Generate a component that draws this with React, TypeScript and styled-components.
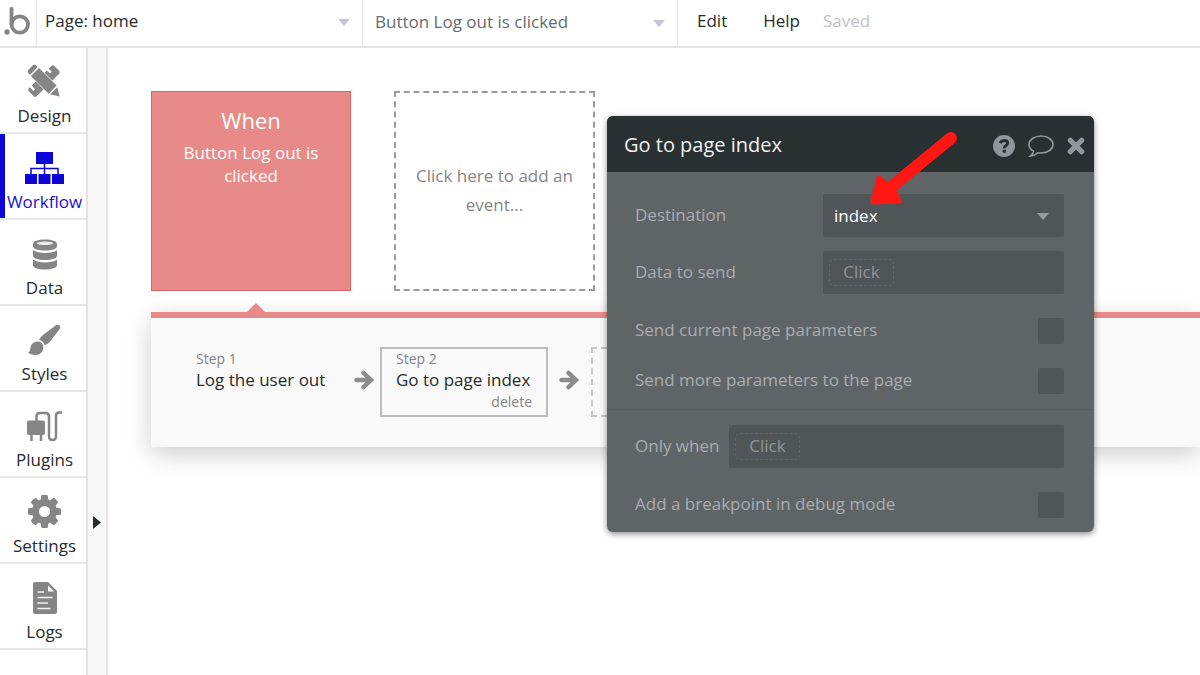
import React from "react";
import styled, { createGlobalStyle } from "styled-components";

const GlobalStyle = createGlobalStyle`
  *, *::before, *::after { box-sizing: border-box; }
  body { margin: 0; background: #fff; color: #262b2d; }
  body, button, select, input { font-family: "Open Sans", "Liberation Sans", sans-serif; font-size: 17px; }
  button { padding: 0; border: 0; background: none; color: inherit; cursor: pointer; }
  svg { display: block; flex: none; }
  p, h1, h2 { margin: 0; font-weight: 400; }
`;

const Shell = styled.div`
  display: flex;
  flex-direction: column;
  min-height: 100vh;
  overflow: hidden;
`;

const TopBar = styled.header`
  display: flex;
  align-items: stretch;
  height: 48px;
  border-bottom: 2px solid #e3e3e3;
`;

const LogoCell = styled.a`
  display: flex;
  align-items: center;
  width: 37px;
  padding: 0 0 4px 4px;
  border-right: 1px solid #e6e6e6;
`;

const Picker = styled.label<{ $tone: string; $width: number; $inset: number; $lift: number }>`
  display: grid;
  align-items: center;
  flex: 0 1 ${(p) => p.$width}px;
  padding: 0 12px ${(p) => p.$lift}px ${(p) => p.$inset}px;
  border-right: 1px solid #e6e6e6;
  color: ${(p) => p.$tone};

  select, svg { grid-area: 1 / 1; }
  svg { justify-self: end; margin-top: 3px; pointer-events: none; }
`;

const BarSelect = styled.select`
  appearance: none;
  width: 100%;
  height: 40px;
  padding: 0 24px 0 0;
  border: 0;
  background: transparent;
  color: inherit;
`;

const Menu = styled.nav`
  display: flex;
  align-items: center;
  padding: 0 19px 5px;
`;

const MenuButton = styled.button`
  margin-right: 36px;
`;

const Saved = styled.span`
  margin-left: -13px;
  color: #c2c2c2;
`;

const Body = styled.div`
  display: flex;
  flex: 1;
`;

const Sidebar = styled.nav`
  flex: none;
  width: 88px;
  border-right: 2px solid #e2e2e2;
`;

const SideItem = styled.button<{ $active?: boolean }>`
  display: flex;
  flex-direction: column;
  align-items: center;
  justify-content: flex-end;
  width: 100%;
  height: 86px;
  padding: 0 0 4px 3px;
  border-bottom: 2px solid #e6e6e6;
  box-shadow: ${(p) => (p.$active ? "inset 5px 0 0 #0d05d6" : "none")};
  color: ${(p) => (p.$active ? "#1a12d8" : "#262b2d")};
  line-height: 24px;

  svg { margin-bottom: 6px; }
`;

const Gutter = styled.div`
  flex: none;
  width: 20px;
  border-right: 2px solid #e2e2e2;
  background: #f8f8f8;
`;

const ExpandButton = styled.button`
  display: block;
  margin: 468px 0 0 5px;
`;

const Canvas = styled.main`
  position: relative;
  flex: 1;
  min-width: 0;
  padding: 43px 0 44px 43px;
`;

const Events = styled.div`
  display: flex;
  gap: 43px;
`;

const EventCard = styled.button`
  display: flex;
  flex-direction: column;
  align-items: center;
  width: 200px;
  height: 200px;
  padding: 13px 20px;
  border: 1px solid #d96463;
  background: #e88a87;
  color: #fff;
  line-height: 23px;
`;

const EventTitle = styled.span`
  margin-bottom: 6px;
  font-size: 22px;
  line-height: 30px;
`;

const AddEvent = styled.button`
  width: 201px;
  height: 200px;
  padding: 0 16px 2px;
  border: 2px dashed #9a9a9a;
  color: #858585;
  line-height: 29px;
`;

const Track = styled.section`
  position: relative;
  display: flex;
  align-items: center;
  height: 135px;
  margin-top: 21px;
  border-top: 6px solid #e88a87;
  background: #f9f9f9;
  box-shadow: 0 7px 24px rgba(0, 0, 0, 0.2);
`;

const Pointer = styled.svg`
  position: absolute;
  top: -15px;
  left: 95px;
`;

const Step = styled.button<{ $selected?: boolean }>`
  display: flex;
  flex-direction: column;
  width: ${(p) => (p.$selected ? "168px" : "163px")};
  height: 70px;
  padding: 0 14px;
  border: 2px solid ${(p) => (p.$selected ? "#bcbdc1" : "transparent")};
  text-align: left;
  line-height: 22px;
  white-space: nowrap;
`;

const Steps = styled.div`
  display: flex;
  align-items: center;
  gap: 5px;
  padding: 0 0 1px 29px;
`;

const ArrowSlot = styled.span`
  width: 27px;
  padding: 0 0 4px 6px;
`;

const Small = styled.span<{ $end?: boolean }>`
  align-self: ${(p) => (p.$end ? "flex-end" : "flex-start")};
  color: #858585;
  font-size: 14px;
  line-height: ${(p) => (p.$end ? "22px" : "20px")};
`;

const AddStep = styled.button`
  width: 168px;
  height: 70px;
  margin-left: 6px;
  border: 2px dashed #c6c6c6;
`;

const Dialog = styled.section`
  position: absolute;
  top: 68px;
  left: 499px;
  width: 487px;
  border-radius: 6px;
  background: #5f6467;
  box-shadow: 0 2px 6px rgba(0, 0, 0, 0.45);
  color: #a9adaf;
`;

const DialogHead = styled.header`
  display: flex;
  align-items: center;
  gap: 13px;
  height: 56px;
  padding: 4px 9px 0 17px;
  border-radius: 6px 6px 0 0;
  background: #293032;
  color: #8f969c;
`;

const DialogTitle = styled.h1`
  flex: 1;
  padding-bottom: 3px;
  color: #f0f1f1;
  font-size: 20px;
`;

const Group = styled.div<{ $last?: boolean }>`
  display: flex;
  flex-direction: column;
  padding: ${(p) => (p.$last ? "15px 30px 14px 28px" : "22px 30px 15px 28px")};
  border-top: ${(p) => (p.$last ? "1px solid #595e60" : "0")};
`;

const Row = styled.div<{ $gap: number; $check?: boolean }>`
  display: flex;
  align-items: center;
  justify-content: space-between;
  height: ${(p) => (p.$check ? "26px" : "43px")};
  margin-bottom: ${(p) => p.$gap}px;

  label { padding-bottom: ${(p) => (p.$check ? 4 : 2)}px; white-space: nowrap; }
`;

const Field = styled.div<{ $width: number }>`
  display: grid;
  align-items: center;
  width: ${(p) => p.$width}px;
  height: 43px;
  border-radius: 2px;
  background: #505558;

  & > svg { grid-area: 1 / 1; justify-self: end; margin: 2px 15px 0 0; pointer-events: none; }
`;

const FieldSelect = styled.select`
  grid-area: 1 / 1;
  appearance: none;
  width: 100%;
  height: 43px;
  padding: 0 36px 0 11px;
  border: 0;
  background: transparent;
  color: #fff;
`;

const Chip = styled.button`
  width: 65px;
  height: 27px;
  margin-left: 6px;
  padding-bottom: 2px;
  border: 1px dashed #5f6466;
  border-radius: 5px;
  color: #919495;
  line-height: 22px;
`;

const Check = styled.input`
  appearance: none;
  width: 26px;
  height: 26px;
  margin: 0;
  border-radius: 2px;
  background: #505558;
`;

const Annotation = styled.svg`
  position: absolute;
  top: 79px;
  left: 759px;
  pointer-events: none;
`;

const GREY = "#858585";

const Caret = ({ color }: { color: string }) => (
  <svg width="12" height="7" viewBox="0 0 12 7">
    <path d="M0 0h12L6 7z" fill={color} />
  </svg>
);

const BubbleLogo = () => (
  <svg width="26" height="28" viewBox="0 0 26 28" fill="none">
    <circle cx="3" cy="25" r="2.700" fill={GREY} />
    <path d="M7.500 1.800V17" stroke={GREY} strokeWidth="3.800" strokeLinecap="round" />
    <circle cx="15.800" cy="17.500" r="8.200" stroke={GREY} strokeWidth="3.800" />
  </svg>
);

const DesignIcon = () => (
  <svg width="34" height="34" viewBox="0 0 34 34">
    <g transform="translate(16 17)">
      <path
        transform="rotate(-45)"
        d="M-16 -5.500H-14.500V-.5H-12V-5.500H9.500V-1H12V-5.500H15.500Q18 -5.500 18 -3V3Q18 5.500 15.500 5.500H-16Q-18 5.500 -18 3.500V-3.500Q-18 -5.500 -16 -5.500Z"
        fill={GREY}
      />
      <g transform="rotate(45)">
        <rect x="-12.500" y="-6.300" width="24" height="12.600" fill="#fff" />
        <path d="M-14.300 -5.500V5.500H-16.500Q-19 5.500 -19 3V-3Q-19 -5.500 -16.500 -5.500Z" fill={GREY} />
        <rect x="-12.800" y="-5.700" width="25" height="11.400" fill={GREY} />
        <path d="M13.700 -5L22 0L13.700 5Z" fill={GREY} />
      </g>
    </g>
  </svg>
);

const WorkflowIcon = () => (
  <svg width="39" height="32" viewBox="0 0 39 32">
    <g fill="#0d05d6">
      <rect x="11" y="0" width="17" height="12" />
      <rect x="0" y="22" width="12" height="10" />
      <rect x="13.500" y="22" width="12" height="10" />
      <rect x="27" y="22" width="12" height="10" />
    </g>
    <path d="M19.500 12V22M6 22V16.500H33V22" fill="none" stroke="#0d05d6" strokeWidth="1.500" />
  </svg>
);

const DataIcon = () => (
  <svg width="26" height="31" viewBox="0 0 26 31">
    <path d="M1 5C1 2 6 .5 13 .5S25 2 25 5V7C25 10 20 11.500 13 11.500S1 10 1 7Z" fill={GREY} />
    <ellipse cx="13" cy="4.200" rx="8" ry="1.700" fill="#ececec" />
    <path d="M1 11C4 13.300 8 14 13 14S22 13.300 25 11V16.500C25 19.300 20 21 13 21S1 19.300 1 16.500Z" fill={GREY} />
    <path d="M1 20.500C4 22.800 8 23.500 13 23.500S22 22.800 25 20.500V26C25 28.800 20 30.500 13 30.500S1 28.800 1 26Z" fill={GREY} />
  </svg>
);

const StylesIcon = () => (
  <svg width="33" height="32" viewBox="0 0 33 32">
    <path
      d="M27.500 1.500C29.500 0 32 .8 32.300 2.800C32.500 4 31.800 5 31 6L22 17.500C20.500 19.300 18.500 20.500 16.700 21.300C16.200 18.500 14 16.300 11 15.800C12 14 13 12.500 15 11Z"
      fill={GREY}
    />
    <path
      d="M10 17.500C13 17.500 15.300 20 15.300 23.300C15.300 28 12 31 7.500 31C4 31 1.500 30 0 28.300C2 28 2 26.500 2.500 23.500C3 20 6 17.500 10 17.500Z"
      fill={GREY}
    />
  </svg>
);

const PluginsIcon = () => (
  <svg width="36" height="31" viewBox="0 0 36 31">
    <rect x="0" y="9.500" width="18" height="14.500" rx="2" fill={GREY} />
    <path
      d="M4.500 23V30M14 23V30M9.500 10V5.500Q9.500 2 13 2H18.500Q22 2 22 5.500V25Q22 29 25.500 29T29 25V5Q29 1.500 32 1.500H35"
      fill="none"
      stroke={GREY}
      strokeWidth="2.500"
    />
  </svg>
);

const SettingsIcon = () => (
  <svg width="33" height="33" viewBox="0 -128 1536 1536">
    <path
      fill={GREY}
      d="M1024 640q0-106-75-181t-181-75-181 75-75 181 75 181 181 75 181-75 75-181zm512-109v222q0 12-8 23t-20 13l-185 28q-19 54-39 91 35 50 107 138 10 12 10 25t-9 23q-27 37-99 108t-94 71q-12 0-26-9l-138-108q-44 23-91 38-16 136-29 186-7 28-36 28h-222q-14 0-24.500-8.500t-11.500-21.500l-28-184q-49-16-90-37l-141 107q-10 9-25 9-14 0-25-11-126-114-165-168-7-10-7-23 0-12 8-23 15-21 51-66.500t54-70.500q-27-50-41-99l-183-27q-13-2-21-12.500t-8-23.500v-222q0-12 8-23t19-13l186-28q14-46 39-92-40-57-107-138-10-12-10-24 0-10 9-23 26-36 98.500-107.500t94.500-71.500q13 0 26 10l138 107q44-23 91-38 16-136 29-186 7-28 36-28h222q14 0 24.500 8.500t11.500 21.500l28 184q49 16 90 37l142-107q9-9 24-9 13 0 25 10 129 119 165 170 7 8 7 22 0 12-8 23-15 21-51 66.500t-54 70.500q26 50 41 98l183 28q13 2 21 12.500t8 23.500z"
    />
  </svg>
);

const LogsIcon = () => (
  <svg width="24" height="32" viewBox="0 0 24 32">
    <path d="M2 0H15L24 9V29.500Q24 32 21.500 32H2.500Q0 32 0 29.500V2Q0 0 2 0Z" fill={GREY} />
    <path d="M15 3.500V9.500H21Z" fill="#fff" />
    <path d="M4.500 10H11M4.500 15.500H19.500M4.500 21H15M4.500 26.500H17.500" stroke="#f2f2f2" strokeWidth="1.500" />
  </svg>
);

const StepArrow = () => (
  <svg width="21" height="20" viewBox="0 0 21 20">
    <path
      d="M2.500 10H16M9.500 2.800L17 10L9.500 17.200"
      fill="none"
      stroke="#8c8c8c"
      strokeWidth="4.400"
      strokeLinecap="round"
    />
  </svg>
);

const HelpIcon = () => (
  <svg width="22" height="22" viewBox="0 0 22 22">
    <circle cx="11" cy="11" r="11" fill="currentColor" />
    <path
      d="M7.200 8.200C8 6.300 9.300 5.500 11.200 5.500C13.300 5.500 14.700 6.600 14.700 8.300C14.700 10.500 11.300 10.600 11.300 13.200"
      fill="none"
      stroke="#293032"
      strokeWidth="3"
    />
    <rect x="9.700" y="14.700" width="3.100" height="3" fill="#293032" />
  </svg>
);

const CommentIcon = () => (
  <svg width="26" height="22" viewBox="0 0 26 22">
    <path
      d="M13 1C6.300 1 1 4.800 1 9.500C1 12.300 2.700 14.600 5.500 16.200C5.200 18.300 4.200 19.700 2.500 21C5.700 20.600 8 19.500 9.800 17.800C10.900 18 11.900 18 13 18C19.700 18 25 14.200 25 9.500S19.700 1 13 1Z"
      fill="none"
      stroke="currentColor"
      strokeWidth="1.600"
    />
  </svg>
);

const CloseIcon = () => (
  <svg width="18" height="18" viewBox="0 0 18 18">
    <path d="M3.300 3.300L14.700 14.700M14.700 3.300L3.300 14.700" stroke="currentColor" strokeWidth="5.200" strokeLinecap="round" />
  </svg>
);

const sections = [
  { name: "Design", icon: <DesignIcon /> },
  { name: "Workflow", icon: <WorkflowIcon />, active: true },
  { name: "Data", icon: <DataIcon /> },
  { name: "Styles", icon: <StylesIcon /> },
  { name: "Plugins", icon: <PluginsIcon /> },
  { name: "Settings", icon: <SettingsIcon /> },
  { name: "Logs", icon: <LogsIcon /> },
];

export default function App() {
  return (
    <Shell>
      <GlobalStyle />
      <TopBar>
        <LogoCell href="#" aria-label="Bubble">
          <BubbleLogo />
        </LogoCell>
        <Picker $tone="#262b2d" $width={326} $inset={8} $lift={5}>
          <BarSelect aria-label="Page">
            <option>Page: home</option>
          </BarSelect>
          <Caret color="#c5c7d0" />
        </Picker>
        <Picker $tone="#656c70" $width={315} $inset={12} $lift={3}>
          <BarSelect aria-label="Event">
            <option>Button Log out is clicked</option>
          </BarSelect>
          <Caret color="#c5c7d0" />
        </Picker>
        <Menu>
          <MenuButton>Edit</MenuButton>
          <MenuButton>Help</MenuButton>
          <Saved>Saved</Saved>
        </Menu>
      </TopBar>
      <Body>
        <Sidebar>
          {sections.map((s) => (
            <SideItem key={s.name} $active={s.active}>
              {s.icon}
              {s.name}
            </SideItem>
          ))}
        </Sidebar>
        <Gutter>
          <ExpandButton aria-label="Expand">
            <svg width="8" height="13" viewBox="0 0 8 13">
              <path d="M0 0L8 6.500L0 13Z" fill="#262b2d" />
            </svg>
          </ExpandButton>
        </Gutter>
        <Canvas>
          <Events>
            <EventCard>
              <EventTitle>When</EventTitle>
              <span>Button Log out is clicked</span>
            </EventCard>
            <AddEvent>Click here to add an event...</AddEvent>
          </Events>
          <Track>
            <Pointer width="20" height="10" viewBox="0 0 20 10">
              <path d="M0 10L10 0L20 10Z" fill="#e88a87" />
            </Pointer>
            <Steps>
              <Step>
                <Small>Step 1</Small>
                Log the user out
              </Step>
              <ArrowSlot>
                <StepArrow />
              </ArrowSlot>
              <Step $selected>
                <Small>Step 2</Small>
                Go to page index
                <Small $end>delete</Small>
              </Step>
              <ArrowSlot>
                <StepArrow />
              </ArrowSlot>
              <AddStep aria-label="Add an action" />
            </Steps>
          </Track>
          <Dialog>
            <DialogHead>
              <DialogTitle>Go to page index</DialogTitle>
              <button aria-label="Help">
                <HelpIcon />
              </button>
              <button aria-label="Comment">
                <CommentIcon />
              </button>
              <button aria-label="Close">
                <CloseIcon />
              </button>
            </DialogHead>
            <Group>
              <Row $gap={14}>
                <label htmlFor="destination">Destination</label>
                <Field $width={241}>
                  <FieldSelect id="destination">
                    <option>index</option>
                  </FieldSelect>
                  <Caret color="#989c9e" />
                </Field>
              </Row>
              <Row $gap={24}>
                <label htmlFor="data">Data to send</label>
                <Field $width={241}>
                  <Chip id="data">Click</Chip>
                </Field>
              </Row>
              <Row $gap={24} $check>
                <label htmlFor="current">Send current page parameters</label>
                <Check type="checkbox" id="current" />
              </Row>
              <Row $gap={0} $check>
                <label htmlFor="more">Send more parameters to the page</label>
                <Check type="checkbox" id="more" />
              </Row>
            </Group>
            <Group $last>
              <Row $gap={24}>
                <label htmlFor="only">Only when</label>
                <Field $width={335}>
                  <Chip id="only">Click</Chip>
                </Field>
              </Row>
              <Row $gap={0} $check>
                <label htmlFor="breakpoint">Add a breakpoint in debug mode</label>
                <Check type="checkbox" id="breakpoint" />
              </Row>
            </Group>
          </Dialog>
          <Annotation width="100" height="85" viewBox="867 127 100 85">
            <path d="M951 138L890 188" stroke="#ff1714" strokeWidth="12" strokeLinecap="round" />
            <path
              d="M879 178L889 186L896 194L899 201L873 202Z"
              fill="#ff1714"
              stroke="#ff1714"
              strokeWidth="5"
              strokeLinejoin="round"
            />
          </Annotation>
        </Canvas>
      </Body>
    </Shell>
  );
}
